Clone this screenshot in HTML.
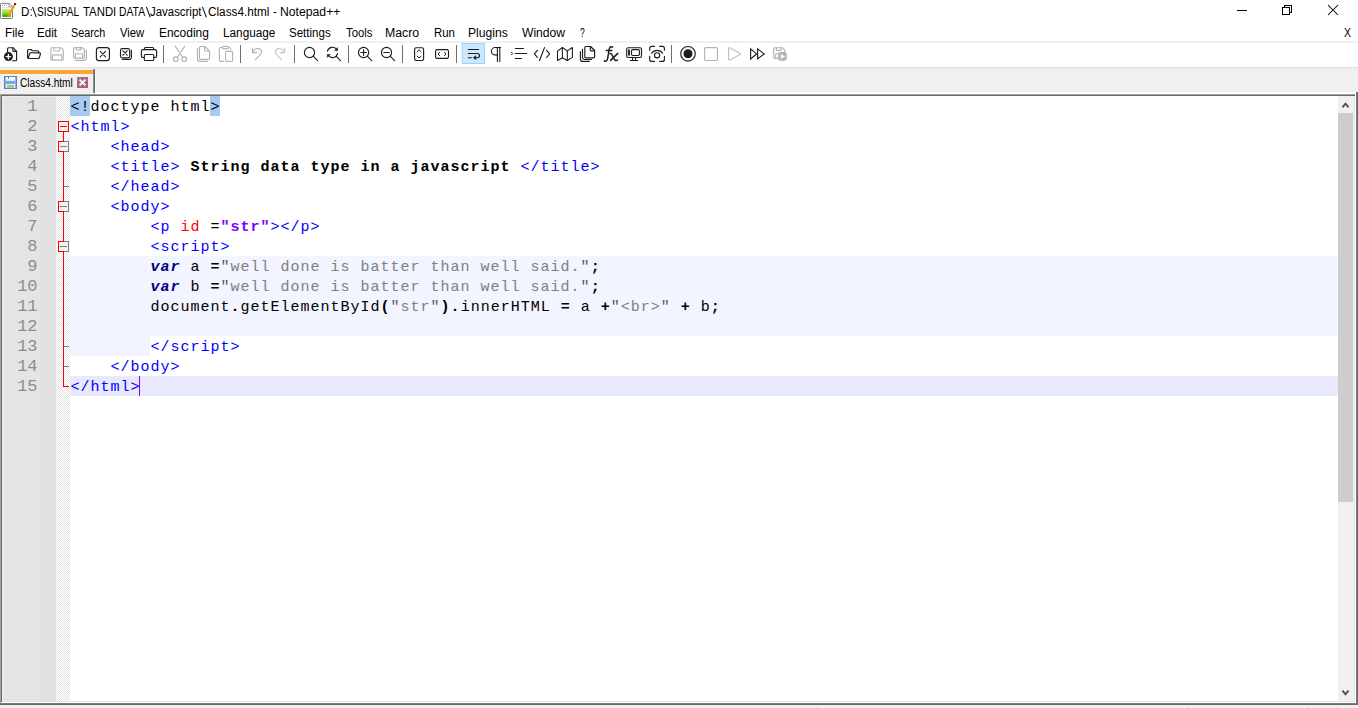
<!DOCTYPE html>
<html>
<head>
<meta charset="utf-8">
<title>Notepad++</title>
<style>
*{box-sizing:border-box;margin:0;padding:0}
html,body{width:1358px;height:708px;overflow:hidden;background:#fff}
body{position:relative;font-family:"Liberation Sans",sans-serif;font-size:12px;color:#000}
.abs{position:absolute}
.fx{position:absolute;display:inline-block;height:16px;line-height:16px;font-size:12px;white-space:pre;transform-origin:0 0}
/* title bar */
/* menu */
#menu{position:absolute;left:0;top:22px;width:1358px;height:20px}
#menu span{position:absolute;top:3px;height:16px;line-height:16px;font-size:12px;white-space:nowrap}
#menuline{position:absolute;left:0;top:41px;width:1358px;height:2px;background:#f0f0f0;z-index:3}
/* toolbar */
#tb{position:absolute;left:0;top:42px;width:1358px;height:25px;background:#fff}
#tbline{position:absolute;left:0;top:67px;width:1358px;height:1px;background:#dfdfdf}
/* tab bar */
#tabbar{position:absolute;left:0;top:68px;width:1358px;height:26px;background:#f0f0f0}
/* editor */
#ed{position:absolute;left:0;top:94px;width:1358px;height:611px;background:#fff}
#lnm{position:absolute;left:2px;top:96px;width:38px;height:605px;background:#e4e4e4}
#lnm2{position:absolute;left:40px;top:96px;width:16px;height:605px;background:#e0e0e0}
.ln{position:absolute;left:2px;width:35.2px;height:20px;line-height:20px;text-align:right;font-family:"Liberation Mono",monospace;font-size:17px;letter-spacing:-0.2px;color:#8e8e8e;z-index:2}
.cl{position:absolute;left:70.5px;height:20px;line-height:20px;font-family:"Liberation Mono",monospace;font-size:15px;letter-spacing:0.999px;white-space:pre;color:#000}
.t{color:#0000ff}
.a{color:#ff0000}
.v{color:#8000ff;font-weight:bold}
.b{font-weight:bold}
.k{color:#000080;font-weight:bold;font-style:italic}
.s{color:#808080}
.q{color:#5a5a5a}
.bg{position:absolute;height:20px}
</style>
</head>
<body>
<!-- TITLE BAR -->
<svg class="abs" style="left:0;top:0" width="20" height="22" viewBox="0 0 20 22">
<defs><linearGradient id="gg" x1="0" y1="0" x2="0" y2="1"><stop offset="0" stop-color="#e8ee60"/><stop offset=".55" stop-color="#8ed42a"/><stop offset="1" stop-color="#128a10"/></linearGradient></defs>
<path d="M0.5 4.2a.8.8 0 0 1 .8-.8H9.2L12.5 6.6V17.7a.8.8 0 0 1-.8.8H1.3a.8.8 0 0 1-.8-.8z" fill="#fff" stroke="#787878" stroke-width="1"/>
<path d="M9 3.6V6.9H12.3" fill="#f4f4f4" stroke="#8a8a8a" stroke-width=".8"/>
<path d="M2 5.5h1M4 5.5h1M6 5.5h1" stroke="#9a9a9a" stroke-width="1"/>
<rect x="2.2" y="7.2" width="6.8" height="1" fill="#c9d9e8"/>
<rect x="2.2" y="9" width="8.6" height="7.8" fill="url(#gg)"/>
<path d="M7.6 15.6L13.2 5.6L14.7 6.5L9.1 16.4L7.4 17.2z" fill="#f7a800" stroke="#d98c00" stroke-width=".4"/>
<path d="M13.2 5.6L14 4.3L15.4 5.1L14.7 6.5z" fill="#9fb4cc"/>
<rect x="14" y="3" width="2.1" height="2" rx=".5" fill="#a00000"/>
</svg>
<svg class="abs" style="left:1228px;top:0" width="130" height="22" viewBox="1228 0 130 22" fill="none" stroke="#000" stroke-width="1" shape-rendering="crispEdges">
<path d="M1237 10.5H1247"/>
<rect x="1282.5" y="7.5" width="7" height="7"/>
<path d="M1284.5 7.5V5.5H1291.5V12.5H1289.5"/>
<path d="M1328 5L1338 15M1338 5L1328 15" shape-rendering="geometricPrecision" stroke-width="1.05"/>
</svg>
<div id="titlewrap">
<span class="fx" style="left:20.93px;top:4px;transform:scaleX(0.97)">D:</span>
<span class="fx" style="left:37.3px;top:4px;transform:scaleX(0.844)">SISUPAL</span>
<span class="fx" style="left:82.9px;top:4px;transform:scaleX(0.9471)">TANDI</span>
<span class="fx" style="left:119.04px;top:4px;transform:scaleX(0.8633)">DATA</span>
<span class="fx" style="left:150.4px;top:4px;transform:scaleX(0.9519)">Javascript</span>
<span class="fx" style="left:207.5px;top:4px;transform:scaleX(0.9806)">Class4.html</span>
<span class="fx" style="left:273.3px;top:4px;transform:scaleX(0.925)">-</span>
<span class="fx" style="left:280.18px;top:4px;transform:scaleX(1.0172)">Notepad++</span>
<svg class="abs" style="left:0;top:0" width="360" height="22" viewBox="0 0 360 22" stroke="#111" stroke-width="1.05" fill="none"><path d="M32.6 6.9L36.2 17.2M146.4 6.9L150.2 17.2M202.5 6.9L206.3 17.2"/></svg>
</div>

<!-- MENU -->
<div id="menu">
<span class="fx" style="left:4.62px;top:3px;transform:scaleX(0.9778)">File</span>
<span class="fx" style="left:36.63px;top:3px;transform:scaleX(0.97)">Edit</span>
<span class="fx" style="left:71.1px;top:3px;transform:scaleX(0.8974)">Search</span>
<span class="fx" style="left:120.2px;top:3px;transform:scaleX(0.9385)">View</span>
<span class="fx" style="left:158.8px;top:3px;transform:scaleX(0.9959)">Encoding</span>
<span class="fx" style="left:222.92px;top:3px;transform:scaleX(0.9808)">Language</span>
<span class="fx" style="left:289.4px;top:3px;transform:scaleX(0.9605)">Settings</span>
<span class="fx" style="left:345.7px;top:3px;transform:scaleX(0.9393)">Tools</span>
<span class="fx" style="left:385.38px;top:3px;transform:scaleX(1.025)">Macro</span>
<span class="fx" style="left:433.85px;top:3px;transform:scaleX(0.9524)">Run</span>
<span class="fx" style="left:468.39px;top:3px;transform:scaleX(1.0132)">Plugins</span>
<span class="fx" style="left:522.4px;top:3px;transform:scaleX(1.0093)">Window</span>
<span class="fx" style="left:580.2px;top:3px;transform:scaleX(0.7143)">?</span>
<span class="fx" style="left:1344.0px;top:3px;transform:scaleX(0.875)">X</span>
</div>
<div id="menuline"></div>

<!-- TOOLBAR -->
<div id="tb">
<!--ICONS-START-->
<svg class="abs" style="left:0;top:0" width="800" height="26" viewBox="0 42 800 26" fill="none" stroke="#1e1e1e" stroke-width="1.15" stroke-linecap="round" stroke-linejoin="round">
<!-- wrap highlight -->
<rect x="462.5" y="43.5" width="22" height="20" fill="#cce8ff" stroke="#99d1ff" stroke-width="1"/>
<!-- separators -->
<g stroke="#6e6e6e" stroke-width="1" stroke-linecap="butt">
<path d="M163.5 45V63M240.5 45V63M294.5 45V63M348.5 45V63M402.5 45V63M456.5 45V63M671.5 45V63"/>
</g>
<!-- 1 new -->
<g id="i-new">
<path d="M7.6 52V48.7a1 1 0 0 1 1-1H13l3.6 3.6V59.7a1 1 0 0 1-1 1H12.5"/>
<path d="M12.8 47.9V50.4a1 1 0 0 0 1 1H16.4"/>
<circle cx="8.4" cy="56.6" r="4.5" fill="#1e1e1e" stroke="none"/>
<path d="M6.2 56.6H10.6M8.4 54.4V58.8" stroke="#fff" stroke-width="1.3"/>
</g>
<!-- 2 open -->
<g id="i-open">
<path d="M27.6 57.5V50.6a1.1 1.1 0 0 1 1.1-1.1H31l1.2 1.2H37.6a1.1 1.1 0 0 1 1.1 1.1V52.8"/>
<path d="M28.2 58.5L29.6 53.6a1 1 0 0 1 1-.8H39.6a.9.9 0 0 1 .9 1.1L39.3 57.7a1 1 0 0 1-1 .8H28.7a1.1 1.1 0 0 1-1.1-1.1"/>
</g>
<!-- 3 save (disabled) -->
<g id="i-save" stroke="#b4b4b4">
<path d="M51.9 47.7H61l2.3 2.3V59.1a1 1 0 0 1-1 1H51.9a1 1 0 0 1-1-1V48.7a1 1 0 0 1 1-1z"/>
<path d="M53.8 47.7V50.2a.8.8 0 0 0 .8.8H58.9a.8.8 0 0 0 .8-.8V47.7"/>
<path d="M52.5 60.1V55.6a.8.8 0 0 1 .8-.8H60.9a.8.8 0 0 1 .8.8V60.1"/>
</g>
<!-- 4 save all (disabled) -->
<g id="i-saveall" stroke="#b4b4b4">
<path d="M74.6 47.6H82.4l2 2V57.1a1 1 0 0 1-1 1H74.6a1 1 0 0 1-1-1V48.6a1 1 0 0 1 1-1z"/>
<path d="M76.3 47.6V49.3a.7.7 0 0 0 .7.7H80.3a.7.7 0 0 0 .7-.7V47.6"/>
<path d="M75.4 58.1V54.4a.7.7 0 0 1 .7-.7H82a.7.7 0 0 1 .7.7V58.1"/>
<path d="M86.4 50.2V58.2a2.2 2.2 0 0 1-2.2 2.2H75.4"/>
</g>
<!-- 5 close -->
<g id="i-close">
<rect x="96.4" y="47.6" width="13" height="13" rx="2.6"/>
<path d="M100.2 51.4L105.6 56.8M105.6 51.4L100.2 56.8" stroke-width="1.1"/>
</g>
<!-- 6 close all -->
<g id="i-closeall">
<rect x="120.5" y="48.6" width="9.2" height="9.2" rx="1.8"/>
<path d="M122.9 50.9L127.1 55.1M127.1 50.9L122.9 55.1" stroke-width="1.25"/>
<path d="M131.4 50.4V57.1a2.3 2.3 0 0 1-2.3 2.3H122.4"/>
</g>
<!-- 7 print -->
<g id="i-print">
<path d="M144.5 49.5V48.5a1 1 0 0 1 1-1H152.6a1 1 0 0 1 1 1V49.5"/>
<path d="M144.2 57.5H143a1.6 1.6 0 0 1-1.6-1.6V51.2a1.6 1.6 0 0 1 1.6-1.6H155a1.6 1.6 0 0 1 1.6 1.6V55.9a1.6 1.6 0 0 1-1.6 1.6H153.8"/>
<rect x="144.3" y="54.5" width="9.5" height="6" rx="1.1"/>
</g>
<!-- 8 cut (disabled) -->
<g id="i-cut" stroke="#b4b4b4">
<circle cx="175.8" cy="59.2" r="2.3"/>
<circle cx="184.2" cy="59.2" r="2.3"/>
<path d="M175.2 46.2L182.9 57.3M184.8 46.2L181.2 51.6M179.4 54.3L177.1 57.3"/>
</g>
<!-- 9 copy (disabled) -->
<g id="i-copy" stroke="#b4b4b4">
<path d="M200.6 46.5H204.9l4.7 4.7V58.3a1.1 1.1 0 0 1-1.1 1.1H200.6a1.1 1.1 0 0 1-1.1-1.1V47.6a1.1 1.1 0 0 1 1.1-1.1z"/>
<path d="M204.5 46.7V50a1 1 0 0 0 1 1H209.4"/>
<path d="M197.5 48.4V59a2.4 2.4 0 0 0 2.4 2.4H207.4"/>
</g>
<!-- 10 paste (disabled) -->
<g id="i-paste" stroke="#b4b4b4">
<path d="M223.4 61.4H220.5a1.1 1.1 0 0 1-1.1-1.1V48.6a1.1 1.1 0 0 1 1.1-1.1H222.4M228.3 47.5H229.5a1.1 1.1 0 0 1 1.1 1.1V49.6"/>
<rect x="222.4" y="46.4" width="6" height="2.2" rx="1.1"/>
<rect x="225.6" y="51.4" width="7" height="10" rx="1.1"/>
</g>
<!-- 11 undo (disabled) -->
<g id="i-undo" stroke="#b4b4b4">
<path d="M252.4 48.2V52.6H256.9"/>
<path d="M252.6 52.4C253.8 49.9 256.3 48.3 258.6 48.6C261.2 49 262.2 51.6 261 53.8C260.5 54.7 259.6 55.4 258.9 56.1L255.4 59.6"/>
</g>
<!-- 12 redo (disabled lighter) -->
<g id="i-redo" stroke="#c6c6c6">
<path d="M284.6 48.2V52.6H280.1"/>
<path d="M284.4 52.4C283.2 49.9 280.7 48.3 278.4 48.6C275.8 49 274.8 51.6 276 53.8C276.5 54.7 277.4 55.4 278.1 56.1L281.6 59.6"/>
</g>
<!-- 13 find -->
<g id="i-find">
<circle cx="309.5" cy="52.5" r="5.1"/>
<path d="M313.2 56.2L317.6 60.6"/>
</g>
<!-- 14 replace -->
<g id="i-replace">
<path d="M327.4 51.2A5.2 5.2 0 0 1 336.6 49.3"/>
<path d="M337.5 53.6A5.2 5.2 0 0 1 328.4 55.7"/>
<path d="M337.6 47.9V50.5H335z" fill="#1e1e1e" stroke-width=".6"/>
<path d="M327.3 57.1V54.5H329.9z" fill="#1e1e1e" stroke-width=".6"/>
<path d="M336.3 56.3L340.6 60.6"/>
</g>
<!-- 15 zoom in -->
<g id="i-zin">
<circle cx="363.6" cy="52.5" r="5.1"/>
<path d="M360.8 52.5H366.4M363.6 49.7V55.3"/>
<path d="M367.3 56.2L371.7 60.6"/>
</g>
<!-- 16 zoom out -->
<g id="i-zout">
<circle cx="386.5" cy="52.5" r="5.1"/>
<path d="M383.7 52.5H389.3"/>
<path d="M390.2 56.2L394.6 60.6"/>
</g>
<!-- 17 sync v -->
<g id="i-syncv">
<rect x="414.6" y="47.7" width="9" height="12.8" rx="1.7"/>
<path d="M417.2 51.6L419.1 49.9L421 51.6M417.2 56.3L419.1 58L421 56.3" stroke-width="1"/>
</g>
<!-- 18 sync h -->
<g id="i-synch">
<rect x="435.6" y="49.6" width="12.9" height="8.8" rx="1.7"/>
<path d="M439.7 52.2L438.1 54L439.7 55.8M444.4 52.2L446 54L444.4 55.8" stroke-width="1"/>
</g>
<!-- 19 wrap -->
<g id="i-wrap">
<path d="M468.2 49.5H478.6"/>
<path d="M468.2 53.5H477.4a2.1 2.1 0 0 1 0 4.2H474"/>
<path d="M468.2 57.7H471.4"/>
<path d="M475.4 56.1L473.6 57.7L475.4 59.3z" fill="#1e1e1e" stroke-width=".9"/>
</g>
<!-- 20 pilcrow -->
<g id="i-pil" stroke-width="1.1">
<path d="M500.6 47.5H495.1a3.7 3.7 0 0 0 0 7.4H497.4"/>
<path d="M497.4 47.5V61.6M499.8 47.5V61.6"/>
</g>
<!-- 21 indent guide -->
<g id="i-indent">
<path d="M515.3 48.5H523.6M515.3 53.5H526.6M515.3 58.5H521.6"/>
<path d="M511.5 52.3L512.7 53.5L511.5 54.7" stroke-width="1"/>
</g>
<!-- 22 code -->
<g id="i-code">
<path d="M537.4 50.4L534.4 53.9L537.4 57.5M546.6 50.4L549.6 53.9L546.6 57.5M544.5 47.6L539.5 60.5"/>
</g>
<!-- 23 map -->
<g id="i-map" stroke-width="1.1">
<path d="M557.5 51.1L562.4 47.5L567.3 50.9L572.4 47.5V57.4L567.3 60.5L562.4 57.7L557.5 60.5z"/>
<path d="M562.4 47.5V57.7M567.3 50.9V60.5"/>
</g>
<!-- 24 doc list -->
<g id="i-doclist">
<path d="M585.9 46.5H590.6l4 4V56.7a1.1 1.1 0 0 1-1.1 1.1H585.9a1.1 1.1 0 0 1-1.1-1.1V47.6a1.1 1.1 0 0 1 1.1-1.1z"/>
<path d="M590.3 46.7V49.8a1 1 0 0 0 1 1H594.4"/>
<path d="M582.5 49.4V57.3a2.2 2.2 0 0 0 2.2 2.2H591.6"/>
<path d="M580.4 51.6V58.9a2.5 2.5 0 0 0 2.5 2.5H589.4"/>
</g>
<!-- 25 fx -->
<g id="i-fx" stroke-width="1.5">
<path d="M612.6 47.1C611.6 46.3 609.9 46.5 609.4 48.4C608.9 50.3 608.3 55.5 607.6 58.6C607.1 60.9 605.7 61.8 604.4 60.8"/>
<path d="M606.3 50.6H611.8"/>
<path d="M610 53.6C611.2 53.2 611.9 54.3 612.4 55.6L614.2 59.2C614.8 60.4 615.9 61 617.4 60.1"/>
<path d="M617.8 53.4L610.6 60.4"/>
</g>
<!-- 26 monitor -->
<g id="i-mon">
<rect x="626.7" y="47.7" width="14.8" height="9.8" rx="1.5"/>
<rect x="631.5" y="49.6" width="7.9" height="5.9" rx="1.2"/>
<path d="M629 49.6V55.6" stroke-width="1.9" stroke-linecap="butt"/>
<path d="M632.6 57.6V60.3M635.6 57.6V60.3M630.3 60.5H637.9"/>
</g>
<!-- 27 focus -->
<g id="i-focus">
<path d="M649.7 50.2V48.4a2 2 0 0 1 2-2H654.5M659.7 46.4H662.4a2 2 0 0 1 2 2V50.2M664.4 56.4V59.4a2 2 0 0 1-2 2H659.7M654.5 61.4H651.7a2 2 0 0 1-2-2V56.4"/>
<path d="M651.6 53.2C654.4 49.4 659.8 49.4 662.6 53.2"/>
<circle cx="657.1" cy="55.3" r="2.6"/>
</g>
<!-- 28 record -->
<g id="i-rec">
<circle cx="688" cy="53.8" r="7.3"/>
<circle cx="688" cy="53.8" r="4.5" fill="#1e1e1e" stroke="none"/>
</g>
<!-- 29 stop (disabled) -->
<g id="i-stop" stroke="#b4b4b4">
<rect x="704.6" y="47.6" width="12.9" height="12.9" rx="1.4"/>
</g>
<!-- 30 play (disabled) -->
<g id="i-play" stroke="#c0c0c0">
<path d="M728.6 48.6a.9.9 0 0 1 1.3-.8L740 53.2a.8.8 0 0 1 0 1.4L729.9 60a.9.9 0 0 1-1.3-.8z"/>
</g>
<!-- 31 ff -->
<g id="i-ff" stroke-linejoin="miter">
<path d="M750.6 48.9L756.6 53.9L750.6 58.9z"/>
<path d="M757.6 48.9L764.2 53.9L757.6 58.9z"/>
</g>
<!-- 32 save macro (disabled) -->
<g id="i-savemac" stroke="#b4b4b4">
<path d="M778 58.3H774.7a1 1 0 0 1-1-1V48.7a1 1 0 0 1 1-1H782.4l2.2 2.2V52"/>
<path d="M776.3 47.7V49.7a.7.7 0 0 0 .7.7H780.6a.7.7 0 0 0 .7-.7V47.7"/>
<path d="M775.7 58.3V54.4a.7.7 0 0 1 .7-.7H778"/>
<rect x="778.1" y="52" width="8.7" height="8.7" rx="2.2" fill="#b4b4b4" stroke="none"/>
<path d="M781.3 54.6L784.6 56.5L781.3 58.4z" fill="#fff" stroke="#fff" stroke-width=".5"/>
</g>
</svg>

<!--ICONS-END-->
</div>
<div id="tbline"></div>

<!-- TAB BAR -->
<div id="tabbar">
<div class="abs" style="left:0;top:1px;width:93px;height:25px;background:#f0f0f0"></div>
<div class="abs" style="left:0;top:2px;width:93px;height:4px;background:#faa535"></div>
<div class="abs" style="left:0;top:6px;width:93px;height:1px;background:#f1f4f8"></div>
<div class="abs" style="left:93px;top:1px;width:1px;height:24px;background:#8c8c8c"></div>
<div class="abs" style="left:94px;top:1px;width:1px;height:24px;background:#696969"></div>
<div class="abs" style="left:95px;top:2px;width:1px;height:24px;background:#fafafa"></div>
<div class="abs" style="left:95px;top:24px;width:1261px;height:2px;background:#fff"></div>
<svg class="abs" style="left:4px;top:8px" width="13" height="13" viewBox="0 0 13 13" shape-rendering="crispEdges">
<rect x="0" y="0" width="13" height="13" fill="#5585c8"/>
<rect x="1" y="1" width="11" height="11" fill="#8eb2e6"/>
<rect x="2" y="1" width="9" height="3" fill="#fbfcfe"/>
<rect x="2" y="4" width="9" height="1" fill="#dde8f6"/>
<rect x="4" y="1" width="1" height="2" fill="#5585c8"/>
<rect x="2" y="5" width="9" height="3" fill="#79a5e4"/>
<rect x="2" y="8" width="9" height="4" fill="#eaf1fa"/>
<rect x="3" y="9" width="7" height="3" fill="#a6d07e"/>
<rect x="3" y="9" width="7" height="1" fill="#98c570"/>
</svg>
<div id="tabtxt"><span class="fx" style="left:19.8px;top:7px;transform:scaleX(0.8419)">Class4.html</span></div>
<svg class="abs" style="left:77px;top:9px" width="11" height="11" viewBox="0 0 11 11">
<defs><linearGradient id="cg" x1="0" y1="0" x2="1" y2="1"><stop offset="0" stop-color="#a874a0"/><stop offset=".35" stop-color="#ab6682"/><stop offset="1" stop-color="#b05c72"/></linearGradient></defs>
<rect x="0" y="0" width="11" height="11" fill="url(#cg)"/>
<path d="M3.3 3.3L7.7 7.7M7.7 3.3L3.3 7.7" stroke="#fff" stroke-width="1.9" stroke-linecap="square"/>
</svg>
</div>

<!-- EDITOR -->
<div id="ed">
<div class="abs" style="left:0;top:0;width:1356px;height:1px;background:#a0a0a0"></div>
<div class="abs" style="left:1px;top:1px;width:1354px;height:1px;background:#696969"></div>
<div class="abs" style="left:0;top:0;width:1px;height:609px;background:#a0a0a0"></div>
<div class="abs" style="left:1px;top:1px;width:1px;height:607px;background:#696969"></div>
<div class="abs" style="left:2px;top:607px;width:1353px;height:1px;background:#e3e3e3"></div>
<div class="abs" style="left:1px;top:608px;width:1355px;height:1px;background:#fff"></div>
<div class="abs" style="left:0;top:609px;width:1358px;height:1px;background:#7b7b7b"></div>
<div class="abs" style="left:0;top:610px;width:1358px;height:1px;background:#696969"></div>
<div class="abs" style="left:1354px;top:2px;width:1px;height:606px;background:#e3e3e3"></div>
<div class="abs" style="left:1355px;top:0;width:1px;height:609px;background:#fff"></div>
<div class="abs" style="left:1356px;top:-2px;width:1px;height:613px;background:#7b7b7b"></div>
<div class="abs" style="left:1357px;top:-2px;width:1px;height:613px;background:#696969"></div>
<!-- scrollbar -->
<div class="abs" style="left:1338px;top:2px;width:16px;height:605px;background:#f0f0f0"></div>
<div class="abs" style="left:1338px;top:19px;width:15px;height:389px;background:#cdcdcd"></div>
<svg class="abs" style="left:1338px;top:2px" width="16" height="605" viewBox="0 0 16 605" fill="none" stroke="#505050" stroke-width="1.9" stroke-linejoin="miter">
<path d="M4.4 11.3L7.5 7.7L10.6 11.3"/>
<path d="M4.4 594.6L7.5 598.2L10.6 594.6"/>
</svg>
</div>
<div id="lnm"></div><div class="abs" style="left:2px;top:96px;width:1px;height:605px;background:#f0f0f0;z-index:1"></div><div class="abs" style="left:2px;top:96px;width:54px;height:1px;background:#eeeeee;z-index:1"></div><div id="lnm2"></div>
<div class="abs" style="left:0;top:705px;width:1358px;height:3px;background:#f0f0f0"></div>
<div class="abs" style="left:817px;top:707px;width:1px;height:1px;background:#c4c4c4"></div>
<div class="abs" style="left:1077px;top:707px;width:1px;height:1px;background:#c4c4c4"></div>
<div class="abs" style="left:1187px;top:707px;width:1px;height:1px;background:#c4c4c4"></div>
<div class="abs" style="left:1307px;top:707px;width:1px;height:1px;background:#c4c4c4"></div>
<div class="abs" style="left:1337px;top:707px;width:1px;height:1px;background:#c4c4c4"></div>
<!--EDITOR-CONTENT-START-->
<svg class="abs" style="left:56px;top:96px" width="14" height="605" viewBox="56 96 14 605" shape-rendering="crispEdges">
<defs><pattern id="chk" x="0" y="0" width="2" height="2" patternUnits="userSpaceOnUse"><rect width="2" height="2" fill="#fff"/><rect x="0" y="0" width="1" height="1" fill="#e6e6e6"/><rect x="1" y="1" width="1" height="1" fill="#e6e6e6"/></pattern></defs>
<rect x="56" y="96" width="14" height="605" fill="url(#chk)"/>
<rect x="63" y="132" width="1" height="255" fill="#ff0000"/>
<rect x="63" y="386" width="6" height="1" fill="#ff0000"/>
<rect x="64" y="186" width="5" height="1" fill="#808080"/>
<rect x="64" y="346" width="5" height="1" fill="#808080"/>
<rect x="64" y="366" width="5" height="1" fill="#808080"/>
<rect x="58" y="121" width="11" height="11" fill="#f2f2f2"/>
<path d="M58.5 121.5H68.5V131.5H58.5z" fill="none" stroke="#ff0000" stroke-width="1"/>
<rect x="60" y="126" width="7" height="1" fill="#ff0000"/>
<rect x="58" y="141" width="11" height="11" fill="#f2f2f2"/>
<path d="M63.5 141.5H68.5V151.5H63.5" fill="none" stroke="#808080" stroke-width="1"/>
<path d="M64 141.5H58.5V151.5H64" fill="none" stroke="#ff0000" stroke-width="1"/>
<rect x="60" y="146" width="7" height="1" fill="#808080"/>
<rect x="58" y="201" width="11" height="11" fill="#f2f2f2"/>
<path d="M63.5 201.5H68.5V211.5H63.5" fill="none" stroke="#808080" stroke-width="1"/>
<path d="M64 201.5H58.5V211.5H64" fill="none" stroke="#ff0000" stroke-width="1"/>
<rect x="60" y="206" width="7" height="1" fill="#808080"/>
<rect x="58" y="241" width="11" height="11" fill="#f2f2f2"/>
<path d="M63.5 241.5H68.5V251.5H63.5" fill="none" stroke="#808080" stroke-width="1"/>
<path d="M64 241.5H58.5V251.5H64" fill="none" stroke="#ff0000" stroke-width="1"/>
<rect x="60" y="246" width="7" height="1" fill="#808080"/>
</svg>
<div class="bg" style="left:70px;top:256px;width:1268px;height:80px;background:#f2f4ff"></div>
<div class="bg" style="left:70px;top:336px;width:80px;height:20px;background:#f2f4ff"></div>
<div class="bg" style="left:70px;top:376px;width:1268px;height:20px;background:#e8e8ff"></div>
<div class="bg" style="left:70px;top:96px;width:20px;height:20px;background:#a6caf0"></div>
<div class="bg" style="left:210px;top:96px;width:10px;height:20px;background:#a6caf0"></div>
<div class="ln" style="top:97px">1</div>
<div class="cl" style="top:98px">&lt;!doctype html&gt;</div>
<div class="ln" style="top:117px">2</div>
<div class="cl" style="top:118px"><span class="t">&lt;html&gt;</span></div>
<div class="ln" style="top:137px">3</div>
<div class="cl" style="top:138px">    <span class="t">&lt;head&gt;</span></div>
<div class="ln" style="top:157px">4</div>
<div class="cl" style="top:158px">    <span class="t">&lt;title&gt;</span><span class="b"> String data type in a javascript </span><span class="t">&lt;/title&gt;</span></div>
<div class="ln" style="top:177px">5</div>
<div class="cl" style="top:178px">    <span class="t">&lt;/head&gt;</span></div>
<div class="ln" style="top:197px">6</div>
<div class="cl" style="top:198px">    <span class="t">&lt;body&gt;</span></div>
<div class="ln" style="top:217px">7</div>
<div class="cl" style="top:218px">        <span class="t">&lt;p</span> <span class="a">id</span> =<span class="v">"str"</span><span class="t">&gt;&lt;/p&gt;</span></div>
<div class="ln" style="top:237px">8</div>
<div class="cl" style="top:238px">        <span class="t">&lt;script&gt;</span></div>
<div class="ln" style="top:257px">9</div>
<div class="cl" style="top:258px">        <span class="k">var</span> a <span class="b">=</span><span class="q">"</span><span class="s">well done is batter than well said.</span><span class="q">"</span><span class="b">;</span></div>
<div class="ln" style="top:277px">10</div>
<div class="cl" style="top:278px">        <span class="k">var</span> b <span class="b">=</span><span class="q">"</span><span class="s">well done is batter than well said.</span><span class="q">"</span><span class="b">;</span></div>
<div class="ln" style="top:297px">11</div>
<div class="cl" style="top:298px">        document<span class="b">.</span>getElementById<span class="b">(</span><span class="q">"</span><span class="s">str</span><span class="q">"</span><span class="b">).</span>innerHTML <span class="b">=</span> a <span class="b">+</span><span class="q">"</span><span class="s">&lt;br&gt;</span><span class="q">"</span> <span class="b">+</span> b<span class="b">;</span></div>
<div class="ln" style="top:317px">12</div>
<div class="ln" style="top:337px">13</div>
<div class="cl" style="top:338px">        <span class="t">&lt;/script&gt;</span></div>
<div class="ln" style="top:357px">14</div>
<div class="cl" style="top:358px">    <span class="t">&lt;/body&gt;</span></div>
<div class="ln" style="top:377px">15</div>
<div class="cl" style="top:378px"><span class="t">&lt;/html&gt;</span></div>
<div class="abs" style="left:139px;top:376px;width:1px;height:20px;background:#8000ff"></div>
<!--EDITOR-CONTENT-END-->
</body>
</html>
